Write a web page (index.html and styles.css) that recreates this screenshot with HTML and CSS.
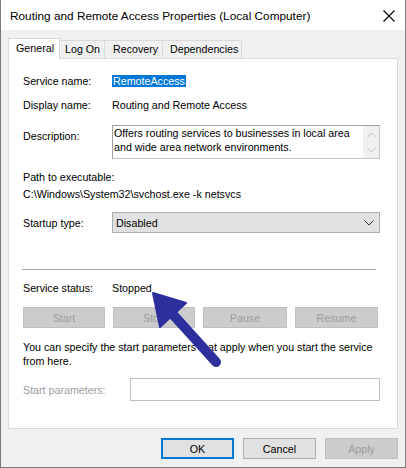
FILE: index.html
```html
<!DOCTYPE html>
<html>
<head>
<meta charset="utf-8">
<link rel="stylesheet" href="styles.css">
</head>
<body>
<div class="window">
  <div class="titlebar">
    <span class="title">Routing and Remote Access Properties (Local Computer)</span>
    <svg class="close" width="12" height="12" viewBox="0 0 12 12"><path d="M0.5 0.5 L11.5 11.5 M11.5 0.5 L0.5 11.5" stroke="#000" stroke-width="1.1" fill="none"/></svg>
  </div>
  <div class="body">
    <div class="tabs">
      <div class="tab active">General</div>
      <div class="tab">Log On</div>
      <div class="tab">Recovery</div>
      <div class="tab">Dependencies</div>
    </div>
    <div class="panel">
      <div class="row r1"><span class="label">Service name:</span><span class="value"><span class="sel">RemoteAccess</span></span></div>
      <div class="row r2"><span class="label">Display name:</span><span class="value">Routing and Remote Access</span></div>
      <div class="row r3"><span class="label lab-desc">Description:</span>
        <div class="textarea">
          <div class="ta-text">Offers routing services to businesses in local area and wide area network environments.</div>
          <div class="scroll">
            <svg width="9" height="6" viewBox="0 0 9 6"><path d="M0.5 5 L4.5 1 L8.5 5" stroke="#c0c0c0" fill="none"/></svg>
            <svg width="9" height="6" viewBox="0 0 9 6"><path d="M0.5 1 L4.5 5 L8.5 1" stroke="#c0c0c0" fill="none"/></svg>
          </div>
        </div>
      </div>
      <div class="path-label">Path to executable:</div>
      <div class="path-value">C:\Windows\System32\svchost.exe -k netsvcs</div>
      <div class="row r4"><span class="label">Startup type:</span>
        <div class="select"><span>Disabled</span>
          <svg width="10" height="6" viewBox="0 0 10 6"><path d="M0.5 0.5 L5 5 L9.5 0.5" stroke="#333" fill="none"/></svg>
        </div>
      </div>
      <div class="sep"></div>
      <div class="row r5"><span class="label">Service status:</span><span class="value">Stopped</span></div>
      <div class="svc-buttons">
        <div class="btn dis b-start">Start</div>
        <div class="btn dis b-stop">Stop</div>
        <div class="btn dis b-pause">Pause</div>
        <div class="btn dis b-resume">Resume</div>
      </div>
      <p class="para">You can specify the start parameters that apply when you start the service from here.</p>
      <div class="row r6"><span class="label grey">Start parameters:</span><div class="input"></div></div>
    </div>
    <div class="footer">
      <div class="btn ok">OK</div>
      <div class="btn">Cancel</div>
      <div class="btn dis">Apply</div>
    </div>
  </div>
  <svg class="arrow" width="406" height="468" viewBox="0 0 406 468">
    <line x1="216" y1="362" x2="168" y2="309" stroke="#2c2f9c" stroke-width="10" stroke-linecap="round"/>
    <polygon points="153,293 186,303 160,327" fill="#2c2f9c" stroke="#2c2f9c" stroke-width="2" stroke-linejoin="round"/>
  </svg>
</div>
</body>
</html>
```

FILE: styles.css
```css
* { box-sizing: border-box; }
html, body { margin: 0; padding: 0; }
body {
  background: #f0f0f0;
  font-family: "Liberation Sans", Arial, sans-serif;
  font-size: 10.7px;
  color: #000;
}
.window {
  position: relative;
  width: 406px;
  height: 468px;
  background: #f0f0f0;
  border-left: 1px solid #7a7a7a;
  border-right: 1px solid #7a7a7a;
  border-bottom: 1px solid #7a7a7a;
  overflow: hidden;
}
.titlebar {
  height: 30px;
  background: #fff;
  display: flex;
  align-items: center;
  justify-content: space-between;
  padding: 0 9px 0 9px;
}
.title {
  font-family: "Liberation Sans", Arial, sans-serif;
  font-size: 11.8px;
  margin-top: 1px;
}
.close { margin-right: 1px; margin-top: 1px; }
.body { padding: 8px 0 0 7px; }
.tabs {
  display: flex;
  align-items: flex-end;
  height: 20px;
  position: relative;
  z-index: 1;
  white-space: nowrap;
}
.tab {
  height: 18px;
  line-height: 17px;
  padding: 0 0 0 5px;
  border: 1px solid #d9d9d9;
  border-bottom: none;
  border-left: none;
  background: #f0f0f0;
}
.tab.active {
  height: 21px;
  line-height: 19px;
  background: #fff;
  border-left: 1px solid #d9d9d9;
  padding: 0 0 0 7px;
  margin-bottom: -1px;
  width: 52px;
}
.tab:nth-child(2) { width: 45px; }
.tab:nth-child(3) { width: 58px; padding-left: 8px; }
.tab:nth-child(4) { width: 79px; padding-left: 7px; }
.panel {
  width: 390px;
  height: 371px;
  background: #fff;
  border: 1px solid #d9d9d9;
  padding: 15px 17px 0 14px;
  display: flex;
  flex-direction: column;
}
.row { display: flex; align-items: flex-start; }
.label { width: 89px; flex: none; line-height: 14px; white-space: nowrap; }
.value { line-height: 14px; }
.sel { background: #0078d7; color: #fff; padding: 0 1px; }
.r2 { margin-top: 10px; }
.r3 { margin-top: 13px; }
.lab-desc { margin-top: 4px; }
.textarea {
  flex: 1;
  height: 34px;
  border: 1px solid #c6c6c6;
  border-top-color: #a0a0a0;
  border-left-color: #a0a0a0;
  display: flex;
}
.ta-text { flex: 1; line-height: 14px; padding: 0 0 0 1px; }
.scroll {
  width: 16px;
  background: #f0f0f0;
  display: flex;
  flex-direction: column;
  align-items: center;
  justify-content: space-between;
  padding: 6px 0 5px;
}
.path-label { margin-top: 11px; line-height: 14px; }
.path-value { margin-top: 3px; line-height: 14px; }
.r4 { margin-top: 11px; align-items: center; }
.select {
  flex: 1;
  height: 21px;
  background: #e1e1e1;
  border: 1px solid #adadad;
  display: flex;
  align-items: center;
  justify-content: space-between;
  padding: 0 5px 0 3px;
}
.sep {
  margin-top: 36px;
  height: 1px;
  background: #a0a0a0;
  margin-left: -1px;
  margin-right: 4px;
}
.r5 { margin-top: 11px; }
.svc-buttons {
  margin-top: 12px;
  display: flex;
  gap: 8px;
}
.btn {
  height: 21px;
  width: 83px;
  border: 1px solid #adadad;
  background: #e1e1e1;
  display: flex;
  align-items: center;
  justify-content: center;
}
.btn.dis {
  background: #cccccc;
  border-color: #bfbfbf;
  color: #9d9d9d;
}
.b-start { width: 82px; }
.b-stop { width: 82px; }
.b-pause { width: 84px; }
.b-resume { width: 83px; }
.para {
  margin: 12px 0 0 0;
  line-height: 14px;
}
.r6 { margin-top: 10px; align-items: center; }
.grey { color: #9d9d9d; width: 107px; }
.input {
  flex: 1;
  height: 23px;
  border: 1px solid #bfbfbf;
  background: #fff;
}
.footer {
  display: flex;
  justify-content: flex-end;
  gap: 9px;
  padding: 9px 7px 0 0;
}
.footer .btn { width: 73px; height: 21px; }
.btn.ok { border: 2px solid #0078d7; }
.arrow { position: absolute; left: -1px; top: 0; pointer-events: none; }
```
